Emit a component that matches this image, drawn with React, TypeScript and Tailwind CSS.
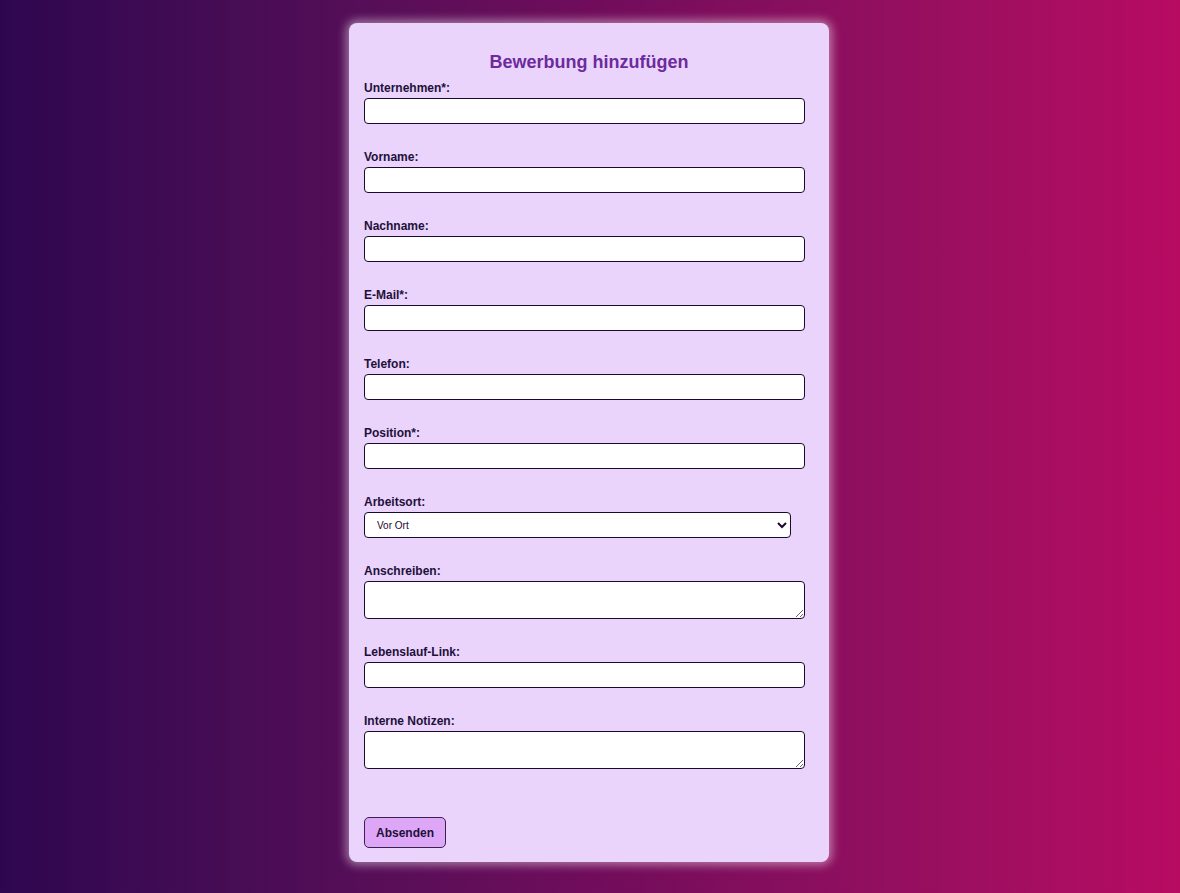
import React, { useState } from "react";

const fields = [
  { id: "unternehmen", label: "Unternehmen*:", type: "input" },
  { id: "vorname", label: "Vorname:", type: "input" },
  { id: "nachname", label: "Nachname:", type: "input" },
  { id: "email", label: "E-Mail*:", type: "input" },
  { id: "telefon", label: "Telefon:", type: "input" },
  { id: "position", label: "Position*:", type: "input" },
  { id: "arbeitsort", label: "Arbeitsort:", type: "select" },
  { id: "anschreiben", label: "Anschreiben:", type: "textarea" },
  { id: "lebenslauf", label: "Lebenslauf-Link:", type: "input" },
  { id: "notizen", label: "Interne Notizen:", type: "textarea" },
];

function App() {
  const [ort, setOrt] = useState("Vor Ort");

  return (
    <div className="min-h-screen w-full bg-gradient-to-r from-[#2e0650] via-[#700c5b] to-[#b70b62] flex justify-center pt-[23px] pb-[31px] font-['Liberation_Sans',Arial,sans-serif]">
      <div className="w-[480px] mr-[2px] bg-[#ead4fb] rounded-lg shadow-[0_0_10px_3px_rgba(255,255,255,0.45)] px-[15px] pt-[29px] pb-[14px] flex flex-col">
        <h3 className="text-center text-[18px] leading-[21px] font-bold text-[#6d2a9e] mb-[8px]">
          Bewerbung hinzufügen
        </h3>

        <form className="flex flex-col" onSubmit={(e) => e.preventDefault()}>
          {fields.map((f) => (
            <div key={f.id} className="flex flex-col mb-[26px]">
              <label
                htmlFor={f.id}
                className="text-[12px] leading-[14px] font-bold text-[#22103a] mb-[3px]"
              >
                {f.label}
              </label>
              {f.type === "input" && (
                <input
                  id={f.id}
                  className="w-[441px] h-[26px] bg-white border border-[#1c0a2e] rounded-[4px] px-2 text-[12px] outline-none"
                />
              )}
              {f.type === "select" && (
                <select
                  id={f.id}
                  value={ort}
                  onChange={(e) => setOrt(e.target.value)}
                  className="w-[427px] h-[26px] bg-white border border-[#1c0a2e] rounded-[4px] pl-[8px] pr-1 text-[10px] text-[#1c0a2e] outline-none"
                >
                  <option>Vor Ort</option>
                  <option>Remote</option>
                  <option>Hybrid</option>
                </select>
              )}
              {f.type === "textarea" && (
                <textarea
                  id={f.id}
                  className="w-[441px] h-[38px] bg-white border border-[#1c0a2e] rounded-[4px] px-2 text-[12px] outline-none block"
                />
              )}
            </div>
          ))}

          <div className="pt-[22px]">
            <button
              type="submit"
              className="bg-[#dea6f7] border border-[#3a1f4f] rounded-[5px] px-[11px] h-[31px] text-[12px] font-bold text-[#22103a]"
            >
              Absenden
            </button>
          </div>
        </form>
      </div>
    </div>
  );
}

export default App;
